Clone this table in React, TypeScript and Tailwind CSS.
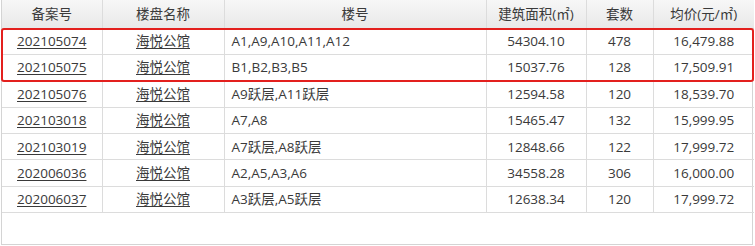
const rows = [
  { id: '202105074', name: '海悦公馆', bld: 'A1,A9,A10,A11,A12', area: '54304.10', units: '478', price: '16,479.88' },
  { id: '202105075', name: '海悦公馆', bld: 'B1,B2,B3,B5', area: '15037.76', units: '128', price: '17,509.91' },
  { id: '202105076', name: '海悦公馆', bld: 'A9跃层,A11跃层', area: '12594.58', units: '120', price: '18,539.70' },
  { id: '202103018', name: '海悦公馆', bld: 'A7,A8', area: '15465.47', units: '132', price: '15,999.95' },
  { id: '202103019', name: '海悦公馆', bld: 'A7跃层,A8跃层', area: '12848.66', units: '122', price: '17,999.72' },
  { id: '202006036', name: '海悦公馆', bld: 'A2,A5,A3,A6', area: '34558.28', units: '306', price: '16,000.00' },
  { id: '202006037', name: '海悦公馆', bld: 'A3跃层,A5跃层', area: '12638.34', units: '120', price: '17,999.72' },
];

const headers = ['备案号', '楼盘名称', '楼号', '建筑面积(㎡)', '套数', '均价(元/㎡)'];
const widths = ['w-[100px]', 'w-[122px]', 'w-[262px]', 'w-[100px]', 'w-[67px]', 'w-[101px]'];

export default function App() {
  return (
    <div
      className="w-[755px] h-[246px] bg-white text-[#3a3a3a] text-[13.5px]"
      style={{ fontFamily: '"Open Sans", "Noto Sans CJK SC", sans-serif' }}
    >
      <div className="relative ml-[1px] w-[752px] h-[245px] border border-[#d4d4d4] border-t-0">
        <table className="w-full border-collapse table-fixed">
          <thead>
            <tr className="h-[28px] bg-gradient-to-b from-[#f7f7f7] to-[#e9e9e9]">
              {headers.map((h, i) => (
                <th
                  key={h}
                  className={`${widths[i]} font-normal text-center border-b border-[#d4d4d4] ${
                    i > 0 ? 'border-l border-l-[#dcdcdc]' : ''
                  }`}
                >
                  {h}
                </th>
              ))}
            </tr>
          </thead>
          <tbody>
            {rows.map(r => (
              <tr key={r.id} className="h-[26.4px] border-b border-[#dcdcdc]">
                <td className="text-center">
                  <span className="underline underline-offset-2">{r.id}</span>
                </td>
                <td className="text-center border-l border-[#dcdcdc]">
                  <span className="underline underline-offset-2">{r.name}</span>
                </td>
                <td className="pl-[7px] border-l border-[#dcdcdc]">{r.bld}</td>
                <td className="text-center border-l border-[#dcdcdc]">{r.area}</td>
                <td className="text-center border-l border-[#dcdcdc]">{r.units}</td>
                <td className="text-center border-l border-[#dcdcdc]">{r.price}</td>
              </tr>
            ))}
          </tbody>
        </table>
        <div className="absolute left-[-1px] top-[28px] w-[753px] h-[54px] border-2 border-[#e3201e] rounded-[3px] pointer-events-none" />
      </div>
    </div>
  );
}
